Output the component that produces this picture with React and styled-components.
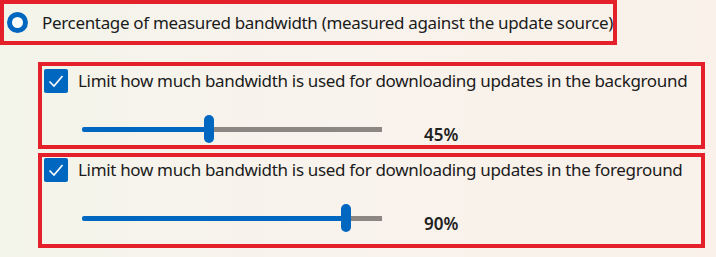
import React from 'react';
import styled, { createGlobalStyle } from 'styled-components';

const GlobalStyle = createGlobalStyle`
  html, body {
    margin: 0;
    padding: 0;
  }
  body {
    width: 716px;
    height: 257px;
    overflow: hidden;
    background: linear-gradient(90deg, #f3f4ea 0%, #f7f3ec 35%, #f9f1ea 100%);
    font-family: "Noto Sans", "Open Sans", Arial, sans-serif;
    color: #1b1b1b;
  }
`;

const Page = styled.div`
  display: flex;
  flex-direction: column;
  align-items: flex-start;
`;

const Highlight = styled.div`
  border: 4px solid #e4202b;
  box-sizing: border-box;
`;

const RadioBox = styled(Highlight)`
  display: flex;
  align-items: center;
  gap: 14px;
  height: 45px;
  padding: 0 0 0 3px;
`;

const Radio = styled.span`
  width: 21px;
  height: 21px;
  box-sizing: border-box;
  border-radius: 50%;
  border: 5.5px solid #0067c0;
  background: #fff;
  flex: none;
`;

const Label = styled.span`
  font-size: 17px;
  line-height: 24px;
  white-space: nowrap;
  letter-spacing: -0.33px;
`;

const Group = styled.div`
  display: flex;
  flex-direction: column;
  gap: 4px;
  margin: 17px 0 0 38px;
`;

const OptionBox = styled(Highlight)`
  width: 667px;
  padding: ${(p) => p.$top}px 0 ${(p) => p.$bottom}px 2px;
  display: flex;
  flex-direction: column;
`;

const CheckRow = styled.div`
  display: flex;
  align-items: center;
  gap: 10px;
`;

const Check = styled.span`
  width: 24px;
  height: 24px;
  border-radius: 2px;
  background: #0067c0;
  display: flex;
  align-items: center;
  justify-content: center;
  flex: none;
`;

const SliderRow = styled.div`
  display: flex;
  align-items: center;
  margin: 22px 0 0 38px;
`;

const Track = styled.div`
  position: relative;
  width: 300px;
  height: 28px;
  display: flex;
  align-items: center;
`;

const Fill = styled.div`
  height: 5px;
  background: #0067c0;
  border-radius: 2px 0 0 2px;
`;

const Rest = styled.div`
  flex: 1;
  height: 5px;
  background: #8c8782;
`;

const Thumb = styled.div`
  position: absolute;
  top: 0;
  width: 10px;
  height: 28px;
  border-radius: 5px;
  background: #0067c0;
`;

const Value = styled.span`
  margin-left: 42px;
  font-size: 17px;
  font-weight: 600;
  color: #222;
  position: relative;
  top: 5px;
`;

const CheckMark = () => (
  <svg width="18" height="18" viewBox="0 0 18 18">
    <path d="M2.5 9.5 L7 14 L15.5 4" fill="none" stroke="#fff" strokeWidth="1.6" />
  </svg>
);

const Option = ({ label, value, top, bottom }) => {
  const center = (value / 100) * 304 - 10;
  return (
    <OptionBox $top={top} $bottom={bottom}>
      <CheckRow>
        <Check>
          <CheckMark />
        </Check>
        <Label>{label}</Label>
      </CheckRow>
      <SliderRow>
        <Track>
          <Fill style={{ width: center }} />
          <Rest />
          <Thumb style={{ left: center - 5 }} />
        </Track>
        <Value>{value}%</Value>
      </SliderRow>
    </OptionBox>
  );
};

export default function App() {
  return (
    <>
      <GlobalStyle />
      <Page>
        <RadioBox>
          <Radio />
          <Label>Percentage of measured bandwidth (measured against the update source)</Label>
        </RadioBox>
        <Group>
          <Option
            label="Limit how much bandwidth is used for downloading updates in the background"
            value={45}
            top={3}
            bottom={2}
          />
          <Option
            label="Limit how much bandwidth is used for downloading updates in the foreground"
            value={90}
            top={1}
            bottom={12}
          />
        </Group>
      </Page>
    </>
  );
}
